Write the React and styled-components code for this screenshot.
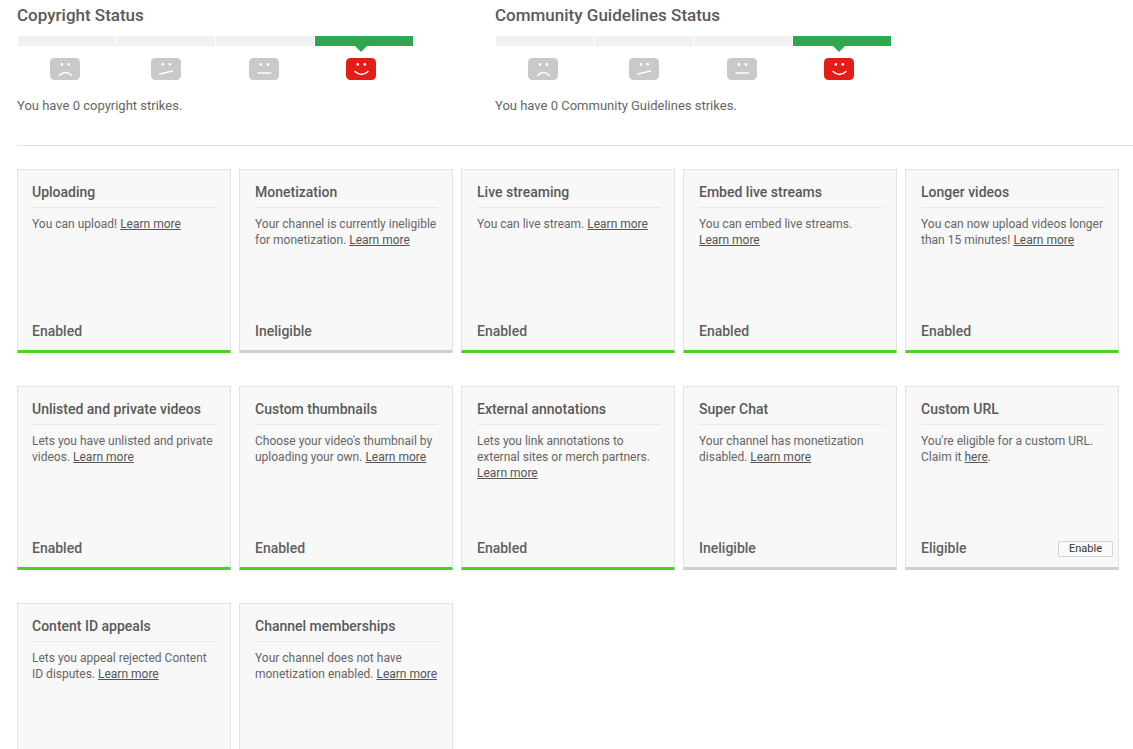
import React from "react";
import styled, { createGlobalStyle } from "styled-components";

const Global = createGlobalStyle`
  html, body { margin: 0; padding: 0; background: #fff; overflow: hidden; height: 749px; }
  body { font-family: Roboto, "Liberation Sans", sans-serif; color: #555; }
`;
const Page = styled.div`
  padding: 0 0 0 17px;
  width: 1116px;
`;
const StatusRow = styled.section`
  display: flex;
  height: 145px;
  border-bottom: 1px solid #e2e2e2;
  box-sizing: content-box;
`;
const StatusBlock = styled.div`
  width: 478px;
  flex: none;
`;
const StatusTitle = styled.h2`
  margin: 0;
  padding-top: 5px;
  height: 36px;
  box-sizing: border-box;
  font-size: 17px;
  line-height: 20px;
  font-weight: 500;
  color: #5a5a5a;
`;
const Meter = styled.div`
  display: grid;
  grid-template-columns: repeat(4, 98px);
  column-gap: 1px;
  margin-left: 1px;
  width: 395px;
`;
const Step = styled.div`
  display: flex;
  flex-direction: column;
  align-items: flex-start;
`;
const Bar = styled.div`
  position: relative;
  height: 10px;
  width: 100%;
  background: ${(p) => (p.$active ? "#2fa650" : "#f1f1f1")};
  ${(p) =>
    p.$active
      ? `&::after {
    content: "";
    position: absolute;
    left: 40px;
    top: 10px;
    border-left: 6px solid transparent;
    border-right: 6px solid transparent;
    border-top: 6px solid #2fa650;
  }`
      : ""}
`;
const FaceIcon = styled.svg`
  display: block;
  margin: 12px 0 0 ${(p) => p.$offset}px;
  width: 30px;
  height: 22px;
`;
const StatusText = styled.p`
  margin: 18px 0 0;
  font-size: 13px;
  line-height: 16px;
  color: #666;
`;
const Grid = styled.section`
  display: grid;
  grid-template-columns: repeat(5, 214px);
  column-gap: 8px;
  row-gap: 33px;
  margin-top: 23px;
`;
const Card = styled.article`
  box-sizing: border-box;
  height: 184px;
  background: #f8f8f8;
  border: 1px solid #e3e3e3;
  border-bottom: 3px solid ${(p) => (p.$on ? "#4dd121" : "#cfcfcf")};
  border-bottom-left-radius: 1px;
  border-bottom-right-radius: 1px;
  padding: 0 14px 0 15px;
  display: flex;
  flex-direction: column;
  &:nth-child(5n + 1) { padding-left: 14px; }
`;
const CardTitle = styled.h3`
  margin: 0;
  padding-top: 14px;
  height: 38px;
  box-sizing: border-box;
  font-size: 14px;
  line-height: 16px;
  font-weight: 500;
  color: #595959;
  border-bottom: 1px solid #e8e8e8;
`;
const CardText = styled.p`
  margin: 8px 0 0;
  font-size: 12px;
  line-height: 16px;
  color: #666;
  flex: 1;
  a { color: #555; text-decoration: underline; }
`;
const CardFoot = styled.div`
  display: flex;
  align-items: center;
  justify-content: space-between;
  height: 16px;
  margin-bottom: 11px;
  margin-right: -9px;
`;
const State = styled.span`
  font-size: 14px;
  line-height: 16px;
  font-weight: 500;
  color: #5f5f5f;
`;
const EnableButton = styled.button`
  box-sizing: border-box;
  width: 55px;
  height: 16px;
  margin-top: 2px;
  padding: 0;
  background: #fafafa;
  border: 1px solid #d3d3d3;
  border-radius: 2px;
  font-family: Roboto, "Liberation Sans", sans-serif;
  font-size: 11px;
  line-height: 14px;
  color: #333;
`;

const mouths = [
  "M9.5 17.5 Q15.4 11.5 21.5 17.5",
  "M9 16 L21.5 13",
  "M9 15 H21.7",
  "M9 13.5 Q15.4 19.5 22 13.5",
];

function Face({ level, active, offset }) {
  return (
    <FaceIcon viewBox="0 0 30 22" $offset={offset}>
      <rect width="30" height="22" rx="4.5" fill={active ? "#e41e17" : "#c9c9c9"} />
      <circle cx="11.8" cy="6.4" r="1.3" fill="#fff" />
      <circle cx="18.8" cy="6.4" r="1.3" fill="#fff" />
      <path d={mouths[level]} fill="none" stroke="#fff" strokeWidth="1.5" strokeLinecap="round" />
    </FaceIcon>
  );
}

const offsets = [32, 34, 33, 31];

function Status({ title, text }) {
  return (
    <StatusBlock>
      <StatusTitle>{title}</StatusTitle>
      <Meter>
        {[0, 1, 2, 3].map((i) => (
          <Step key={i}>
            <Bar $active={i === 3} />
            <Face level={i} active={i === 3} offset={offsets[i]} />
          </Step>
        ))}
      </Meter>
      <StatusText>{text}</StatusText>
    </StatusBlock>
  );
}

const L = () => <a href="#more">Learn more</a>;

const cards = [
  { t: "Uploading", d: <>You can upload! <L /></>, s: "Enabled", on: true },
  { t: "Monetization", d: <>Your channel is currently ineligible for monetization. <L /></>, s: "Ineligible" },
  { t: "Live streaming", d: <>You can live stream. <L /></>, s: "Enabled", on: true },
  { t: "Embed live streams", d: <>You can embed live streams. <L /></>, s: "Enabled", on: true },
  { t: "Longer videos", d: <>You can now upload videos longer than 15 minutes! <L /></>, s: "Enabled", on: true },
  { t: "Unlisted and private videos", d: <>Lets you have unlisted and private videos. <L /></>, s: "Enabled", on: true },
  { t: "Custom thumbnails", d: <>Choose your video's thumbnail by uploading your own. <L /></>, s: "Enabled", on: true },
  { t: "External annotations", d: <>Lets you link annotations to external sites or merch partners. <L /></>, s: "Enabled", on: true },
  { t: "Super Chat", d: <>Your channel has monetization disabled. <L /></>, s: "Ineligible" },
  { t: "Custom URL", d: <>You're eligible for a custom URL. Claim it <a href="#here">here</a>.</>, s: "Eligible", btn: true },
  { t: "Content ID appeals", d: <>Lets you appeal rejected Content ID disputes. <L /></> },
  { t: "Channel memberships", d: <>Your channel does not have monetization enabled. <L /></> },
];

export default function App() {
  return (
    <>
      <Global />
      <Page>
        <StatusRow>
          <Status title="Copyright Status" text="You have 0 copyright strikes." />
          <Status title="Community Guidelines Status" text="You have 0 Community Guidelines strikes." />
        </StatusRow>
        <Grid>
          {cards.map((c) => (
            <Card key={c.t} $on={c.on}>
              <CardTitle>{c.t}</CardTitle>
              <CardText>{c.d}</CardText>
              <CardFoot>
                {c.s && <State>{c.s}</State>}
                {c.btn && <EnableButton>Enable</EnableButton>}
              </CardFoot>
            </Card>
          ))}
        </Grid>
      </Page>
    </>
  );
}
